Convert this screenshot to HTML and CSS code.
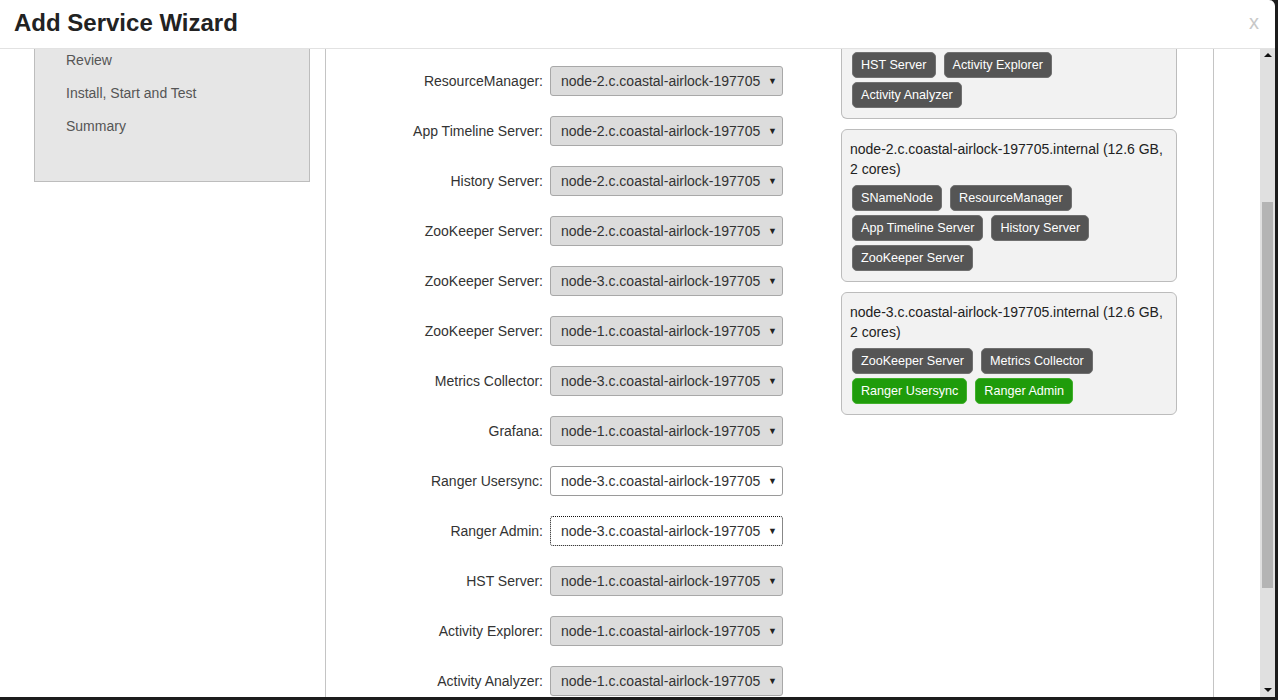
FILE: index.html
```html
<!DOCTYPE html>
<html>
<head>
<meta charset="utf-8">
<link rel="stylesheet" href="styles.css">
</head>
<body>
<div class="modal">
  <div class="modal-header">
    <h1 class="title">Add Service Wizard</h1>
    <span class="close">x</span>
  </div>
  <div class="modal-body">
    <div class="content">
      <div class="nav-col">
        <ul class="nav-box">
          <li>Review</li>
          <li>Install, Start and Test</li>
          <li>Summary</li>
        </ul>
      </div>
      <div class="main-col">
        <div class="form">
          <div class="row"><span class="lbl">ResourceManager:</span><div class="sel">node-2.c.coastal-airlock-197705<span class="arr">▼</span></div></div>
          <div class="row"><span class="lbl">App Timeline Server:</span><div class="sel">node-2.c.coastal-airlock-197705<span class="arr">▼</span></div></div>
          <div class="row"><span class="lbl">History Server:</span><div class="sel">node-2.c.coastal-airlock-197705<span class="arr">▼</span></div></div>
          <div class="row"><span class="lbl">ZooKeeper Server:</span><div class="sel">node-2.c.coastal-airlock-197705<span class="arr">▼</span></div></div>
          <div class="row"><span class="lbl">ZooKeeper Server:</span><div class="sel">node-3.c.coastal-airlock-197705<span class="arr">▼</span></div></div>
          <div class="row"><span class="lbl">ZooKeeper Server:</span><div class="sel">node-1.c.coastal-airlock-197705<span class="arr">▼</span></div></div>
          <div class="row"><span class="lbl">Metrics Collector:</span><div class="sel">node-3.c.coastal-airlock-197705<span class="arr">▼</span></div></div>
          <div class="row"><span class="lbl">Grafana:</span><div class="sel">node-1.c.coastal-airlock-197705<span class="arr">▼</span></div></div>
          <div class="row"><span class="lbl">Ranger Usersync:</span><div class="sel sel-white">node-3.c.coastal-airlock-197705<span class="arr">▼</span></div></div>
          <div class="row"><span class="lbl">Ranger Admin:</span><div class="sel sel-white sel-focus">node-3.c.coastal-airlock-197705<span class="arr">▼</span></div></div>
          <div class="row"><span class="lbl">HST Server:</span><div class="sel">node-1.c.coastal-airlock-197705<span class="arr">▼</span></div></div>
          <div class="row"><span class="lbl">Activity Explorer:</span><div class="sel">node-1.c.coastal-airlock-197705<span class="arr">▼</span></div></div>
          <div class="row"><span class="lbl">Activity Analyzer:</span><div class="sel">node-1.c.coastal-airlock-197705<span class="arr">▼</span></div></div>
        </div>
        <div class="hosts">
          <div class="host host-cut">
            <div class="chips">
              <span class="chip">HST Server</span>
              <span class="chip">Activity Explorer</span>
              <span class="chip">Activity Analyzer</span>
            </div>
          </div>
          <div class="host">
            <div class="host-name">node-2.c.coastal-airlock-197705.internal (12.6 GB, 2 cores)</div>
            <div class="chips">
              <span class="chip">SNameNode</span>
              <span class="chip">ResourceManager</span>
              <span class="chip">App Timeline Server</span>
              <span class="chip">History Server</span>
              <span class="chip">ZooKeeper Server</span>
            </div>
          </div>
          <div class="host">
            <div class="host-name">node-3.c.coastal-airlock-197705.internal (12.6 GB, 2 cores)</div>
            <div class="chips">
              <span class="chip">ZooKeeper Server</span>
              <span class="chip">Metrics Collector</span>
              <span class="chip chip-new">Ranger Usersync</span>
              <span class="chip chip-new">Ranger Admin</span>
            </div>
          </div>
        </div>
      </div>
    </div>
    <div class="scrollbar">
      <span class="sb-arrow sb-up"></span>
      <div class="sb-track"><div class="sb-thumb"></div></div>
      <span class="sb-arrow sb-down"></span>
    </div>
  </div>
</div>
</body>
</html>
```

FILE: styles.css
```css
* { box-sizing: border-box; }
html, body { margin: 0; padding: 0; }
body {
  background: #1c1c1c;
  width: 1278px;
  height: 700px;
  overflow: hidden;
  font-family: "Liberation Sans", Arial, sans-serif;
  color: #333;
}
.modal {
  width: 1275px;
  height: 697px;
  background: #fff;
  border-top-right-radius: 6px;
  display: flex;
  flex-direction: column;
  overflow: hidden;
}
.modal-header {
  height: 49px;
  border-bottom: 1px solid #e2e2e2;
  display: flex;
  align-items: center;
  padding: 0 0 2px 14px;
  flex: none;
}
.title {
  margin: 0;
  font-size: 24px;
  font-weight: bold;
  color: #222;
  flex: 1;
}
.close {
  font-size: 20px;
  color: #c8c8c8;
  margin-right: 16px;
  margin-top: -2px;
}
.modal-body {
  flex: 1;
  display: flex;
  min-height: 0;
}
.content {
  flex: 1;
  display: flex;
  overflow: hidden;
}
.nav-col {
  width: 326px;
  border-right: 1px solid #c4c4c4;
  flex: none;
}
.nav-box {
  list-style: none;
  margin: 0 0 0 34px;
  width: 276px;
  padding: 1px 0 45px 31px;
  border: 1px solid #bdbdbd;
  border-top: none;
  background: #e6e6e6;
}
.nav-box li {
  font-size: 14px;
  line-height: 20px;
  color: #555;
  margin-bottom: 13px;
}
.nav-box li:last-child { margin-bottom: 0; }
.main-col {
  width: 888px;
  border-right: 1px solid #c4c4c4;
  flex: none;
  display: flex;
  align-items: flex-start;
}
.form {
  width: 457px;
  padding-top: 17px;
  display: flex;
  flex-direction: column;
  gap: 20px;
}
.row {
  display: flex;
  justify-content: flex-end;
  align-items: center;
  gap: 7px;
  height: 30px;
}
.lbl {
  font-size: 14px;
  color: #333;
}
.sel {
  width: 233px;
  height: 30px;
  border: 1px solid #a8a8a8;
  border-radius: 3px;
  background: #dcdcdc;
  display: flex;
  align-items: center;
  padding: 0 5px 0 10px;
  font-size: 14px;
  color: #333;
}
.sel-white { background: #fff; border-color: #9a9a9a; }
.sel-focus { border: 1px dotted #111; }
.arr {
  margin-left: auto;
  font-size: 9px;
  color: #222;
}
.hosts {
  margin-left: 58px;
  width: 336px;
  display: flex;
  flex-direction: column;
  gap: 10px;
}
.host {
  border: 1px solid #bcbcbc;
  border-radius: 6px;
  background: #f2f2f2;
  padding: 9px 8px 10px 8px;
}
.host-cut {
  border-top: none;
  border-top-left-radius: 0;
  border-top-right-radius: 0;
  padding-top: 3px;
  padding-bottom: 10px;
}
.host-name {
  font-size: 14px;
  line-height: 20px;
  color: #222;
  margin-bottom: 6px;
}
.chips {
  display: flex;
  flex-wrap: wrap;
  gap: 4px 8px;
  padding-left: 2px;
}
.chip {
  font-size: 12.6px;
  line-height: 18px;
  color: #fff;
  background: #555;
  border: 1px solid #707070;
  border-radius: 5px;
  padding: 3px 8px;
}
.chip-new {
  background: #1f9c0b;
  border-color: #41b02c;
}
.scrollbar {
  width: 15px;
  flex: none;
  background: #e0e0e0;
  display: flex;
  flex-direction: column;
  align-items: center;
}
.sb-arrow {
  width: 0;
  height: 0;
  border-left: 4px solid transparent;
  border-right: 4px solid transparent;
  flex: none;
}
.sb-up {
  border-bottom: 4px solid #111;
  margin-top: 4px;
}
.sb-down {
  border-top: 4px solid #111;
  margin-bottom: 5px;
}
.sb-track {
  flex: 1;
  width: 100%;
  padding-top: 145px;
}
.sb-thumb {
  margin-left: 2px;
  width: 11px;
  height: 386px;
  background: #b4b4b4;
}
```
